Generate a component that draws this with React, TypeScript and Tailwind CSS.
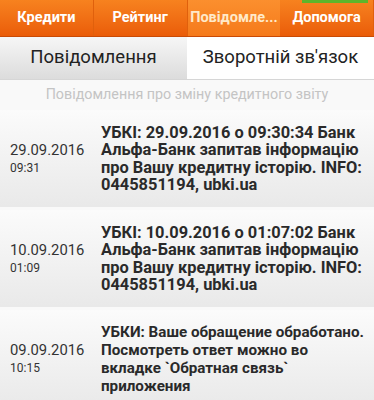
import React from "react";

type Message = {
    date: string;
    time: string;
    text: string;
    size: string;
};

const messages: Message[] = [
    {
        date: "29.09.2016",
        time: "09:31",
        text: "УБКІ: 29.09.2016 о 09:30:34 Банк Альфа-Банк запитав інформацію про Вашу кредитну історію. INFO: 0445851194, ubki.ua",
        size: "text-[16.4px] leading-[17.5px]",
    },
    {
        date: "10.09.2016",
        time: "01:09",
        text: "УБКІ: 10.09.2016 о 01:07:02 Банк Альфа-Банк запитав інформацію про Вашу кредитну історію. INFO: 0445851194, ubki.ua",
        size: "text-[16.4px] leading-[17.5px]",
    },
    {
        date: "09.09.2016",
        time: "10:15",
        text: "УБКИ: Ваше обращение обработано. Посмотреть ответ можно во вкладке `Обратная связь` приложения",
        size: "text-[15.2px] leading-[18px]",
    },
];

const tabs = ["Кредити", "Рейтинг", "Повідомле...", "Допомога"];

const App: React.FC = () => {
    return (
        <div className="w-[374px] h-[400px] overflow-hidden bg-[#f9f9f9] font-['Roboto',sans-serif]">
            {/* top tabs */}
            <div className="relative flex h-[37px] bg-gradient-to-b from-[#f7821f] to-[#ea5c08] border-b border-[#c94a05]">
                {tabs.map((t, i) => (
                    <div
                        key={t}
                        className={
                            i === 2
                                ? "flex-1 flex items-center justify-center text-[14.5px] font-bold text-[#ffe9c8] bg-gradient-to-b from-[#fb8f2e] to-[#f57a1a]"
                                : "flex-1 flex items-center justify-center text-[14.5px] font-bold text-white border-r border-[#e0600c]"
                        }
                    >
                        {t}
                    </div>
                ))}
                <div className="absolute top-0 right-[6px] w-[66px] h-[3px] bg-[#5db52b]" />
            </div>

            {/* sub tabs */}
            <div className="flex h-[43px] border-b border-[#d6d6d6]">
                <div className="flex-1 flex items-center justify-center text-[18.5px] text-[#222] bg-gradient-to-b from-[#f6f6f6] to-[#dcdcdc]">
                    Повідомлення
                </div>
                <div className="flex-1 flex items-center justify-center text-[18.5px] text-[#222] bg-white">
                    Зворотній зв'язок
                </div>
            </div>

            <div className="h-[30px] flex items-center justify-center text-[14.3px] text-[#c4c4c4]">
                Повідомлення про зміну кредитного звіту
            </div>

            <div className="flex flex-col gap-[3px]">
                {messages.map((m) => (
                    <div
                        key={m.date + m.time}
                        className="flex items-center h-[97px] bg-gradient-to-b from-[#fbfbfb] to-[#e9e9e9]"
                    >
                        <div className="w-[101px] pl-[10px] shrink-0">
                            <div className="text-[14.8px] leading-[19px] text-[#333]">{m.date}</div>
                            <div className="text-[12px] leading-[17px] text-[#333]">{m.time}</div>
                        </div>
                        <div className={`pr-[6px] font-bold text-[#2a2a2a] ${m.size}`}>
                            {m.text}
                        </div>
                    </div>
                ))}
            </div>
        </div>
    );
};

export default App;
